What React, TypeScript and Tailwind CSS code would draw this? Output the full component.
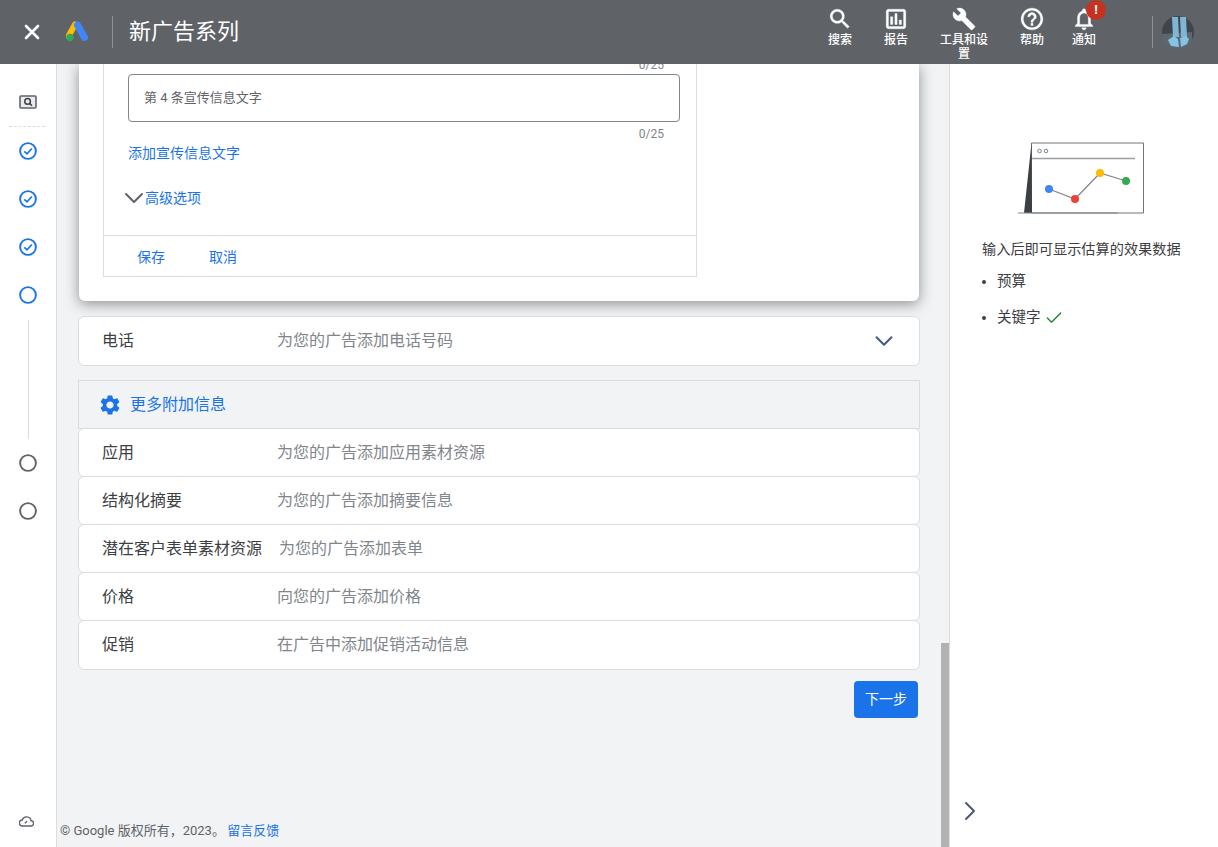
import React from 'react';
import { ChevronDown, ChevronRight, Check, X } from 'lucide-react';

const FONT = "font-['Roboto','Noto_Sans_CJK_SC',sans-serif]";

const navItems = [
  { label: '搜索', size: 26, width: 'w-[56px]', path: 'M15.5 14h-.79l-.28-.27C15.41 12.59 16 11.11 16 9.5 16 5.91 13.09 3 9.5 3S3 5.91 3 9.5 5.91 16 9.5 16c1.61 0 3.09-.59 4.23-1.57l.27.28v.79l5 4.99L20.49 19l-4.99-5zm-6 0C7.01 14 5 11.99 5 9.5S7.01 5 9.5 5 14 7.01 14 9.5 11.99 14 9.5 14z' },
  { label: '报告', size: 26, width: 'w-[56px]', path: 'M19 3H5c-1.1 0-2 .9-2 2v14c0 1.1.9 2 2 2h14c1.1 0 2-.9 2-2V5c0-1.1-.9-2-2-2zm0 16H5V5h14v14zM7 10h2v7H7zm4-3h2v10h-2zm4 6h2v4h-2z' },
  { label: '工具和设置', size: 24, width: 'w-[56px] ml-[12px] mr-[6px]', path: 'M22.7 19l-9.1-9.1c.9-2.3.4-5-1.5-6.9-2-2-5-2.4-7.4-1.3L9 6 6 9 1.6 4.7C.4 7.1.9 10.1 2.9 12.1c1.9 1.9 4.6 2.4 6.9 1.5l9.1 9.1c.4.4 1 .4 1.4 0l2.3-2.3c.5-.4.5-1.1.1-1.4z' },
  { label: '帮助', size: 26, width: 'w-[56px] ml-[6px]', path: 'M11 18h2v-2h-2v2zm1-16C6.48 2 2 6.48 2 12s4.48 10 10 10 10-4.48 10-10S17.52 2 12 2zm0 18c-4.41 0-8-3.59-8-8s3.59-8 8-8 8 3.59 8 8-3.59 8-8 8zm0-14c-2.21 0-4 1.79-4 4h2c0-1.1.9-2 2-2s2 .9 2 2c0 2-3 1.75-3 5h2c0-2.25 3-2.5 3-5 0-2.21-1.79-4-4-4z' },
];

const extensionRows = [
  { label: '应用', hint: '为您的广告添加应用素材资源' },
  { label: '结构化摘要', hint: '为您的广告添加摘要信息' },
  { label: '潜在客户表单素材资源', hint: '为您的广告添加表单' },
  { label: '价格', hint: '向您的广告添加价格' },
  { label: '促销', hint: '在广告中添加促销活动信息' },
];

const AdsLogo = () => (
  <svg width="24" height="22" viewBox="0 0 24 22">
    <path d="M9 3.5 2.6 15" stroke="#fbbc04" strokeWidth="6" strokeLinecap="round" />
    <path d="M11.5 4 18.5 16.5" stroke="#4285f4" strokeWidth="7" strokeLinecap="round" />
    <circle cx="4" cy="16.5" r="3.7" fill="#34a853" />
  </svg>
);

const Avatar = () => (
  <svg width="32" height="32" viewBox="0 0 32 32">
    <circle cx="16" cy="16" r="16" fill="#3f454b" />
    <path d="M0 18a16 16 0 0 0 30 7V16z" fill="#5d676f" />
    <path d="M10 1h6l1 20h-6zM18 1h6l1 20h-6z" fill="#7fb6d6" />
    <path d="M6 24l6-4 4 3 1 8-8-1zM18 22l6-2 3 3-2 5-6 3z" fill="#86c3e4" />
  </svg>
);

const StepDone = () => (
  <svg width="18" height="18" viewBox="0 0 18 18" fill="none" stroke="#1a73e8" strokeWidth="1.9">
    <circle cx="9" cy="9" r="7.9" />
    <path d="M5.3 9.3 8 11.9l4.9-5.4" strokeWidth="1.7" />
  </svg>
);

const StepOpen = ({ color }: { color: string }) => (
  <svg width="18" height="18" viewBox="0 0 18 18" fill="none" stroke={color} strokeWidth="1.9">
    <circle cx="9" cy="9" r="7.9" />
  </svg>
);

const Sidebar = () => (
  <aside className="w-[57px] shrink-0 bg-white border-r border-[#dadce0] flex flex-col items-center">
    <div className="h-[62px] w-full flex flex-col items-center justify-end">
      <svg width="18" height="14" viewBox="0 0 18 14" fill="none" className="mb-[17px]">
        <rect x="1" y="1" width="16" height="12" rx="1" fill="#e8eaed" stroke="#5f6368" strokeWidth="1.6" />
        <circle cx="8.6" cy="6.4" r="2.8" stroke="#3c4043" strokeWidth="1.5" />
        <path d="m10.6 8.4 2.4 2.4" stroke="#3c4043" strokeWidth="1.5" />
      </svg>
    </div>
    <div className="w-[36px] border-t border-dashed border-[#dadce0] -ml-[3px]" />
    <div className="flex flex-col items-center gap-[30px] pt-[15px]">
      <StepDone />
      <StepDone />
      <StepDone />
      <StepOpen color="#1a73e8" />
    </div>
    <div className="w-px h-[119px] bg-[#dadce0] mt-[16px]" />
    <div className="flex flex-col items-center gap-[30px] pt-[15px]">
      <StepOpen color="#5f6368" />
      <StepOpen color="#5f6368" />
    </div>
    <div className="mt-auto mb-[20px] -ml-[4px]">
      <svg width="15" height="11" viewBox="0 0 15 11" fill="none" stroke="#5f6368" strokeWidth="1.4">
        <path d="M3.6 10h8.2a2.6 2.6 0 0 0 .3-5.2A4.6 4.6 0 0 0 3.2 4a3 3 0 0 0 .4 6z" />
        <path d="m5.8 7.2 2.2-2" />
      </svg>
    </div>
  </aside>
);

const Header = () => (
  <header className="h-[64px] shrink-0 bg-[#5f6368] flex items-center text-white">
    <X className="ml-[20px] w-[24px] h-[24px]" strokeWidth={2.6} />
    <div className="ml-[22px] w-[24px] flex items-center">
      <AdsLogo />
    </div>
    <div className="ml-[22px] w-px h-[32px] bg-[#8e9196]" />
    <div className="ml-[16px] text-[22px] leading-[32px]">新广告系列</div>
    <nav className="ml-auto flex items-start h-full pt-[7px]">
      {navItems.map((item) => (
        <div key={item.label} className={`${item.width} flex flex-col items-center`}>
          <div className="h-[24px] flex items-center">
            <svg width={item.size} height={item.size} viewBox="0 0 24 24" fill="white" stroke="white" strokeWidth="0.35">
              <path d={item.path} />
            </svg>
          </div>
          <div className="mt-[2px] text-[12px] leading-[14px] font-medium text-center w-[52px]">{item.label}</div>
        </div>
      ))}
      <div className="relative w-[48px] flex flex-col items-center">
        <svg width="26" height="26" viewBox="0 0 24 24" fill="white" stroke="white" strokeWidth="0.35" className="-my-px">
          <path d="M12 22c1.1 0 2-.9 2-2h-4c0 1.1.9 2 2 2zm6-6v-5c0-3.07-1.63-5.64-4.5-6.32V4c0-.83-.67-1.5-1.5-1.5s-1.5.67-1.5 1.5v.68C7.64 5.36 6 7.92 6 11v5l-2 2v1h16v-1l-2-2zm-2 1H8v-6c0-2.48 1.51-4.5 4-4.5s4 2.02 4 4.5v6z" />
        </svg>
        <span className="absolute top-[-7px] left-[26px] w-[20px] h-[20px] rounded-full bg-[#c5321f] text-[13px] leading-[20px] font-bold text-center">!</span>
        <div className="mt-[2px] text-[12px] leading-[14px] font-medium">通知</div>
      </div>
    </nav>
    <div className="ml-[44px] w-px h-[32px] bg-[#8e9196]" />
    <div className="ml-[9px] mr-[24px] flex">
      <Avatar />
    </div>
  </header>
);

const Row = ({ label, hint, className }: { label: string; hint: string; className: string }) => (
  <div className={`ml-[21px] mr-[29px] bg-white border border-[#dadce0] rounded-[6px] flex items-center pl-[23px] text-[16px] ${className}`}>
    <div className="min-w-[175px] pr-[17px] text-[#3c4043] shrink-0">{label}</div>
    <div className="text-[#80868b]">{hint}</div>
  </div>
);

export default function App() {
  return (
    <div className={`w-[1218px] h-[847px] overflow-hidden flex flex-col bg-white ${FONT}`}>
      <Header />
      <div className="flex flex-1 min-h-0">
        <Sidebar />
        <main className="relative w-[893px] shrink-0 bg-[#f1f3f4] border-r border-[#dadce0] overflow-hidden">
          <div className="ml-[22px] mr-[30px] h-[237px] bg-white rounded-b-[6px] shadow-[0_3px_14px_rgba(60,64,67,0.55)] px-[24px]">
            <div className="w-[594px] h-[213px] border-x border-b border-[#dadce0] flex flex-col">
              <div className="pl-[24px] pr-[16px] -mt-[10px]">
                <div className="text-right pr-[16px] text-[12px] leading-[22px] h-[20px] text-[#80868b]">0/25</div>
                <div className="h-[48px] w-[552px] border border-[#80868b] rounded-[4px] flex items-center pl-[15px] text-[13px] text-[#5f6368]">
                  第 4 条宣传信息文字
                </div>
                <div className="w-[552px] text-right pr-[16px] text-[12px] leading-[16px] mt-[4px] text-[#80868b]">0/25</div>
                <div className="mt-[1px] text-[14px] leading-[20px] text-[#1a73e8]">添加宣传信息文字</div>
                <div className="mt-[25px] flex items-center text-[14px] leading-[20px] text-[#1a73e8]">
                  <ChevronDown className="w-[32px] h-[32px] text-[#5f6368] -ml-[10px] -mr-[5px] -my-[6px]" strokeWidth={1.5} />
                  <span>高级选项</span>
                </div>
              </div>
              <div className="mt-auto h-[41px] border-t border-[#dadce0] flex items-center pl-[33px] pt-[2px] gap-[44px] text-[14px] text-[#1a73e8]">
                <span>保存</span>
                <span>取消</span>
              </div>
            </div>
          </div>

          <div className="mt-[15px] ml-[21px] mr-[29px] h-[50px] bg-white border border-[#dadce0] rounded-[6px] flex items-center pl-[23px] pr-[20px] text-[16px]">
            <div className="w-[175px] text-[#3c4043]">电话</div>
            <div className="text-[#80868b]">为您的广告添加电话号码</div>
            <ChevronDown className="ml-auto w-[30px] h-[30px] text-[#3f5a8a]" strokeWidth={1.6} />
          </div>

          <div className="mt-[14px] ml-[21px] mr-[29px] h-[49px] bg-[#f1f3f4] border border-[#dadce0] flex items-center pl-[19px] gap-[8px] text-[16px] text-[#1a73e8]">
            <svg width="24" height="24" viewBox="0 0 24 24" fill="#1a73e8">
              <path d="M19.14 12.94c.04-.3.06-.61.06-.94 0-.32-.02-.64-.07-.94l2.03-1.58c.18-.14.23-.41.12-.61l-1.92-3.32c-.12-.22-.37-.29-.59-.22l-2.39.96c-.5-.38-1.03-.7-1.62-.94l-.36-2.54c-.04-.24-.24-.41-.48-.41h-3.84c-.24 0-.43.17-.47.41l-.36 2.54c-.59.24-1.13.57-1.62.94l-2.39-.96c-.22-.08-.47 0-.59.22L2.74 8.87c-.12.21-.08.47.12.61l2.03 1.58c-.05.3-.09.63-.09.94s.02.64.07.94l-2.03 1.58c-.18.14-.23.41-.12.61l1.92 3.32c.12.22.37.29.59.22l2.39-.96c.5.38 1.03.7 1.62.94l.36 2.54c.05.24.24.41.48.41h3.84c.24 0 .44-.17.47-.41l.36-2.54c.59-.24 1.13-.56 1.62-.94l2.39.96c.22.08.47 0 .59-.22l1.92-3.32c.12-.22.07-.47-.12-.61l-2.01-1.58zM12 15.6c-1.98 0-3.6-1.62-3.6-3.6s1.62-3.6 3.6-3.6 3.6 1.62 3.6 3.6-1.62 3.6-3.6 3.6z" />
            </svg>
            更多附加信息
          </div>

          <div className="-mt-px">
            {extensionRows.map((row, i) => (
              <Row
                key={row.label}
                label={row.label}
                hint={row.hint}
                className={i === extensionRows.length - 1 ? 'h-[50px] -mt-px' : i === 0 ? 'h-[49px]' : 'h-[49px] -mt-px'}
              />
            ))}
          </div>

          <div className="mt-[11px] pr-[31px] flex justify-end">
            <button className="w-[64px] h-[37px] rounded-[4px] bg-[#1a73e8] text-white text-[14px]">下一步</button>
          </div>

          <div className="absolute left-[3px] bottom-[7px] text-[13px] leading-[18px] text-[#5f6368]">
            © Google 版权所有，2023。 <span className="-ml-px text-[#1a73e8]">留言反馈</span>
          </div>
          <div className="absolute right-0 bottom-0 w-[8px] h-[204px] bg-[#b1b2b3]" />
        </main>

        <aside className="relative flex-1 bg-white">
          <div className="pt-[78px] pl-[68px]">
            <svg width="128" height="72" viewBox="0 0 128 72" fill="none">
              <path d="M13.5 1H125.5V71H13.5z" fill="white" stroke="#70757a" strokeWidth="1" />
              <path d="M13.5 1 6 71h8z" fill="#3c4043" />
              <path d="M0 71h100" stroke="#80868b" strokeWidth="1.2" />
              <path d="M14 16.5h103" stroke="#9aa0a6" strokeWidth="1.4" />
              <circle cx="21.5" cy="9" r="1.8" stroke="#80868b" />
              <circle cx="28" cy="9" r="1.8" stroke="#80868b" />
              <path d="M31 47 57 57 82 31 108 39" stroke="#80868b" strokeWidth="1.2" />
              <circle cx="31" cy="47" r="4" fill="#4285f4" />
              <circle cx="57" cy="57" r="4" fill="#ea4335" />
              <circle cx="82" cy="31" r="4" fill="#fbbc04" />
              <circle cx="108" cy="39" r="4" fill="#34a853" />
            </svg>
          </div>
          <div className="pl-[32px] mt-[25px] text-[14.2px] leading-[20px] text-[#3c4043]">输入后即可显示估算的效果数据</div>
          <ul className="pl-[32px] mt-[13px] text-[14.5px] leading-[20px] text-[#3c4043]">
            <li className="flex items-center">
              <span className="w-[4px] h-[4px] rounded-full bg-[#3c4043] mr-[11px]" />
              预算
            </li>
            <li className="flex items-center mt-[16px]">
              <span className="w-[4px] h-[4px] rounded-full bg-[#3c4043] mr-[11px]" />
              关键字
              <Check className="ml-[3px] w-[20px] h-[20px] text-[#188038]" strokeWidth={1.6} />
            </li>
          </ul>
          <ChevronRight className="absolute left-[4px] bottom-[20px] w-[32px] h-[32px] text-[#4a5a72]" strokeWidth={1.5} />
        </aside>
      </div>
    </div>
  );
}
